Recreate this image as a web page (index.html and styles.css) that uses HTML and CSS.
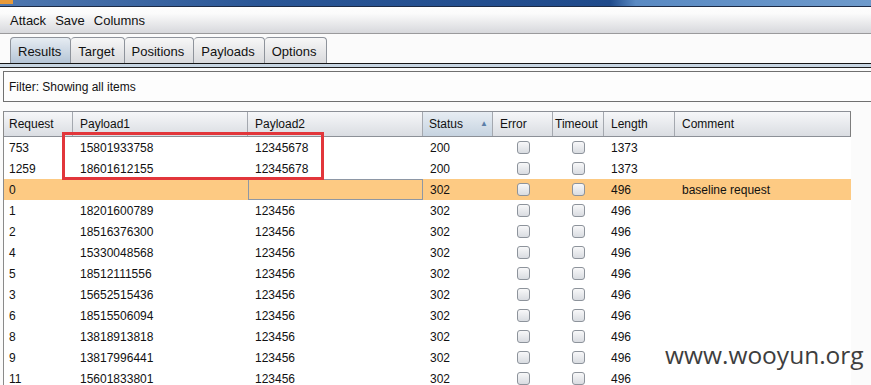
FILE: index.html
```html
<!DOCTYPE html>
<html lang="en">
<head>
    <meta charset="UTF-8">
    <meta name="viewport" content="width=device-width, initial-scale=1.0">
    <title>Intruder attack - results</title>
    <link rel="stylesheet" href="styles.css">
</head>
<body>
    <div class="titlebar"><span class="titlebar-icon"></span></div>

    <div class="menubar">
        <span class="menu-item">Attack</span>
        <span class="menu-item">Save</span>
        <span class="menu-item">Columns</span>
    </div>

    <div class="tabs">
        <span class="tab active">Results</span>
        <span class="tab">Target</span>
        <span class="tab">Positions</span>
        <span class="tab">Payloads</span>
        <span class="tab">Options</span>
    </div>
    <div class="tab-line"></div>

    <div class="filter">Filter: Showing all items</div>

    <div class="results">
        <div class="row head">
            <div class="cell first">Request</div>
            <div class="cell">Payload1</div>
            <div class="cell">Payload2</div>
            <div class="cell sorted">Status <span class="sort-arrow">▲</span></div>
            <div class="cell">Error</div>
            <div class="cell tight">Timeout</div>
            <div class="cell">Length</div>
            <div class="cell">Comment</div>
        </div>

        <div class="row">
            <div class="cell first">753</div><div class="cell">15801933758</div><div class="cell">12345678</div><div class="cell">200</div>
            <div class="cell check"><span class="cb"></span></div><div class="cell check"><span class="cb"></span></div>
            <div class="cell">1373</div><div class="cell"></div>
        </div>
        <div class="row">
            <div class="cell first">1259</div><div class="cell">18601612155</div><div class="cell">12345678</div><div class="cell">200</div>
            <div class="cell check"><span class="cb"></span></div><div class="cell check"><span class="cb"></span></div>
            <div class="cell">1373</div><div class="cell"></div>
        </div>
        <div class="row selected">
            <div class="cell first">0</div><div class="cell"></div><div class="cell focus"></div><div class="cell">302</div>
            <div class="cell check"><span class="cb"></span></div><div class="cell check"><span class="cb"></span></div>
            <div class="cell">496</div><div class="cell">baseline request</div>
        </div>
        <div class="row">
            <div class="cell first">1</div><div class="cell">18201600789</div><div class="cell">123456</div><div class="cell">302</div>
            <div class="cell check"><span class="cb"></span></div><div class="cell check"><span class="cb"></span></div>
            <div class="cell">496</div><div class="cell"></div>
        </div>
        <div class="row">
            <div class="cell first">2</div><div class="cell">18516376300</div><div class="cell">123456</div><div class="cell">302</div>
            <div class="cell check"><span class="cb"></span></div><div class="cell check"><span class="cb"></span></div>
            <div class="cell">496</div><div class="cell"></div>
        </div>
        <div class="row">
            <div class="cell first">4</div><div class="cell">15330048568</div><div class="cell">123456</div><div class="cell">302</div>
            <div class="cell check"><span class="cb"></span></div><div class="cell check"><span class="cb"></span></div>
            <div class="cell">496</div><div class="cell"></div>
        </div>
        <div class="row">
            <div class="cell first">5</div><div class="cell">18512111556</div><div class="cell">123456</div><div class="cell">302</div>
            <div class="cell check"><span class="cb"></span></div><div class="cell check"><span class="cb"></span></div>
            <div class="cell">496</div><div class="cell"></div>
        </div>
        <div class="row">
            <div class="cell first">3</div><div class="cell">15652515436</div><div class="cell">123456</div><div class="cell">302</div>
            <div class="cell check"><span class="cb"></span></div><div class="cell check"><span class="cb"></span></div>
            <div class="cell">496</div><div class="cell"></div>
        </div>
        <div class="row">
            <div class="cell first">6</div><div class="cell">18515506094</div><div class="cell">123456</div><div class="cell">302</div>
            <div class="cell check"><span class="cb"></span></div><div class="cell check"><span class="cb"></span></div>
            <div class="cell">496</div><div class="cell"></div>
        </div>
        <div class="row">
            <div class="cell first">8</div><div class="cell">13818913818</div><div class="cell">123456</div><div class="cell">302</div>
            <div class="cell check"><span class="cb"></span></div><div class="cell check"><span class="cb"></span></div>
            <div class="cell">496</div><div class="cell"></div>
        </div>
        <div class="row">
            <div class="cell first">9</div><div class="cell">13817996441</div><div class="cell">123456</div><div class="cell">302</div>
            <div class="cell check"><span class="cb"></span></div><div class="cell check"><span class="cb"></span></div>
            <div class="cell">496</div><div class="cell"></div>
        </div>
        <div class="row">
            <div class="cell first">11</div><div class="cell">15601833801</div><div class="cell">123456</div><div class="cell">302</div>
            <div class="cell check"><span class="cb"></span></div><div class="cell check"><span class="cb"></span></div>
            <div class="cell">496</div><div class="cell"></div>
        </div>
    </div>

    <!-- annotation drawn over the screenshot -->
    <div class="highlight-box"></div>
    <div class="watermark">www.wooyun.org</div>
</body>
</html>
```

FILE: styles.css
```css
body {
    margin: 0;
    height: 385px;
    overflow: hidden;
    background-color: #fbfbfb;
    font-family: 'Liberation Sans', Arial, sans-serif;
    color: #111;
}
.titlebar {
    height: 6px;
    border-bottom: 1px solid #1c2a45;
    background: linear-gradient(to right, #4f78b0 0, #2a5696 30%, #1f4a8b 70%, #5a8ac3 73%, #6e9acb 100%);
}
.titlebar-icon {
    display: block;
    width: 13px;
    height: 4px;
    background-color: #e89a3a;
}
.menubar {
    height: 26px;
    display: flex;
    align-items: center;
    padding-left: 10px;
    gap: 9px;
    font-size: 13px;
    background: linear-gradient(#fdfdfd 0, #fbfbfb 25%, #d7d8dc 100%);
    border-bottom: 1px solid #9a9a9c;
}
.tabs {
    display: flex;
    padding: 3px 0 0 10px;
    height: 26px;
}
.tab {
    height: 25px;
    line-height: 27px;
    padding: 0 9px 0 7px;
    font-size: 13px;
    border: 1px solid #8e939b;
    border-bottom: none;
    border-left: none;
    border-radius: 4px 4px 0 0;
    background: linear-gradient(#f7f7f7, #d9dadd);
}
.tab:first-child {
    border-left: 1px solid #8e939b;
}
.tab.active {
    background: linear-gradient(#e6ecf2, #b5c5d6);
}
.tab-line {
    height: 3px;
    background-color: #c7d5e2;
    border-top: 1px solid #151515;
    border-bottom: 1px solid #222;
}
.filter {
    margin: 3px 0 0 3px;
    height: 29px;
    line-height: 31px;
    padding-left: 5px;
    font-size: 12px;
    background-color: #fdfdfd;
    border: 1px solid #707070;
    border-right: none;
}
.results {
    margin: 9px 0 0 3px;
    width: 847px;
    border-left: 1px solid #8a8a8a;
    background-color: #fff;
    font-size: 12px;
}
.row {
    display: grid;
    grid-template-columns: 69px 175px 175px 70px 60px 51px 71px 176px;
    height: 21px;
    line-height: 23px;
}
.cell {
    padding-left: 7px;
    white-space: nowrap;
    overflow: hidden;
}
.cell.first {
    padding-left: 5px;
}
.row.head {
    height: 24px;
    line-height: 24px;
    border-top: 1px solid #8c9097;
    border-bottom: 1px solid #8c9097;
    border-right: 1px solid #7d7d7d;
    background: linear-gradient(#f6f7f9, #dadde2);
}
.row.head .cell {
    border-right: 1px solid #a4a8af;
}
.row.head .cell:last-child {
    border-right: none;
}
.row.head .cell.tight {
    padding-left: 2px;
}
.row.head .cell.sorted {
    padding-left: 6px;
    display: flex;
    justify-content: space-between;
    padding-right: 4px;
    background: linear-gradient(#e7edf3, #c6d3e0);
}
.sort-arrow {
    font-size: 8px;
    color: #5b7fa8;
}
.row.selected {
    background-color: #fdca83;
}
.cell.focus {
    box-shadow: inset 0 0 0 1px #8e97a4;
}
.cell.check {
    display: flex;
    justify-content: center;
    align-items: center;
    padding-left: 0;
}
.cb {
    width: 11px;
    height: 11px;
    border: 1px solid #8d939b;
    border-radius: 3px;
    background: linear-gradient(#f8f8f9, #d9dce1);
}
.highlight-box {
    position: absolute;
    left: 62px;
    top: 132px;
    width: 262px;
    height: 48px;
    box-sizing: border-box;
    border: 3px solid #e2363b;
}
.watermark {
    position: absolute;
    left: 665px;
    top: 343px;
    line-height: 24px;
    font-family: 'Open Sans', sans-serif;
    font-size: 24.5px;
    color: #3e3e3e;
}
```
